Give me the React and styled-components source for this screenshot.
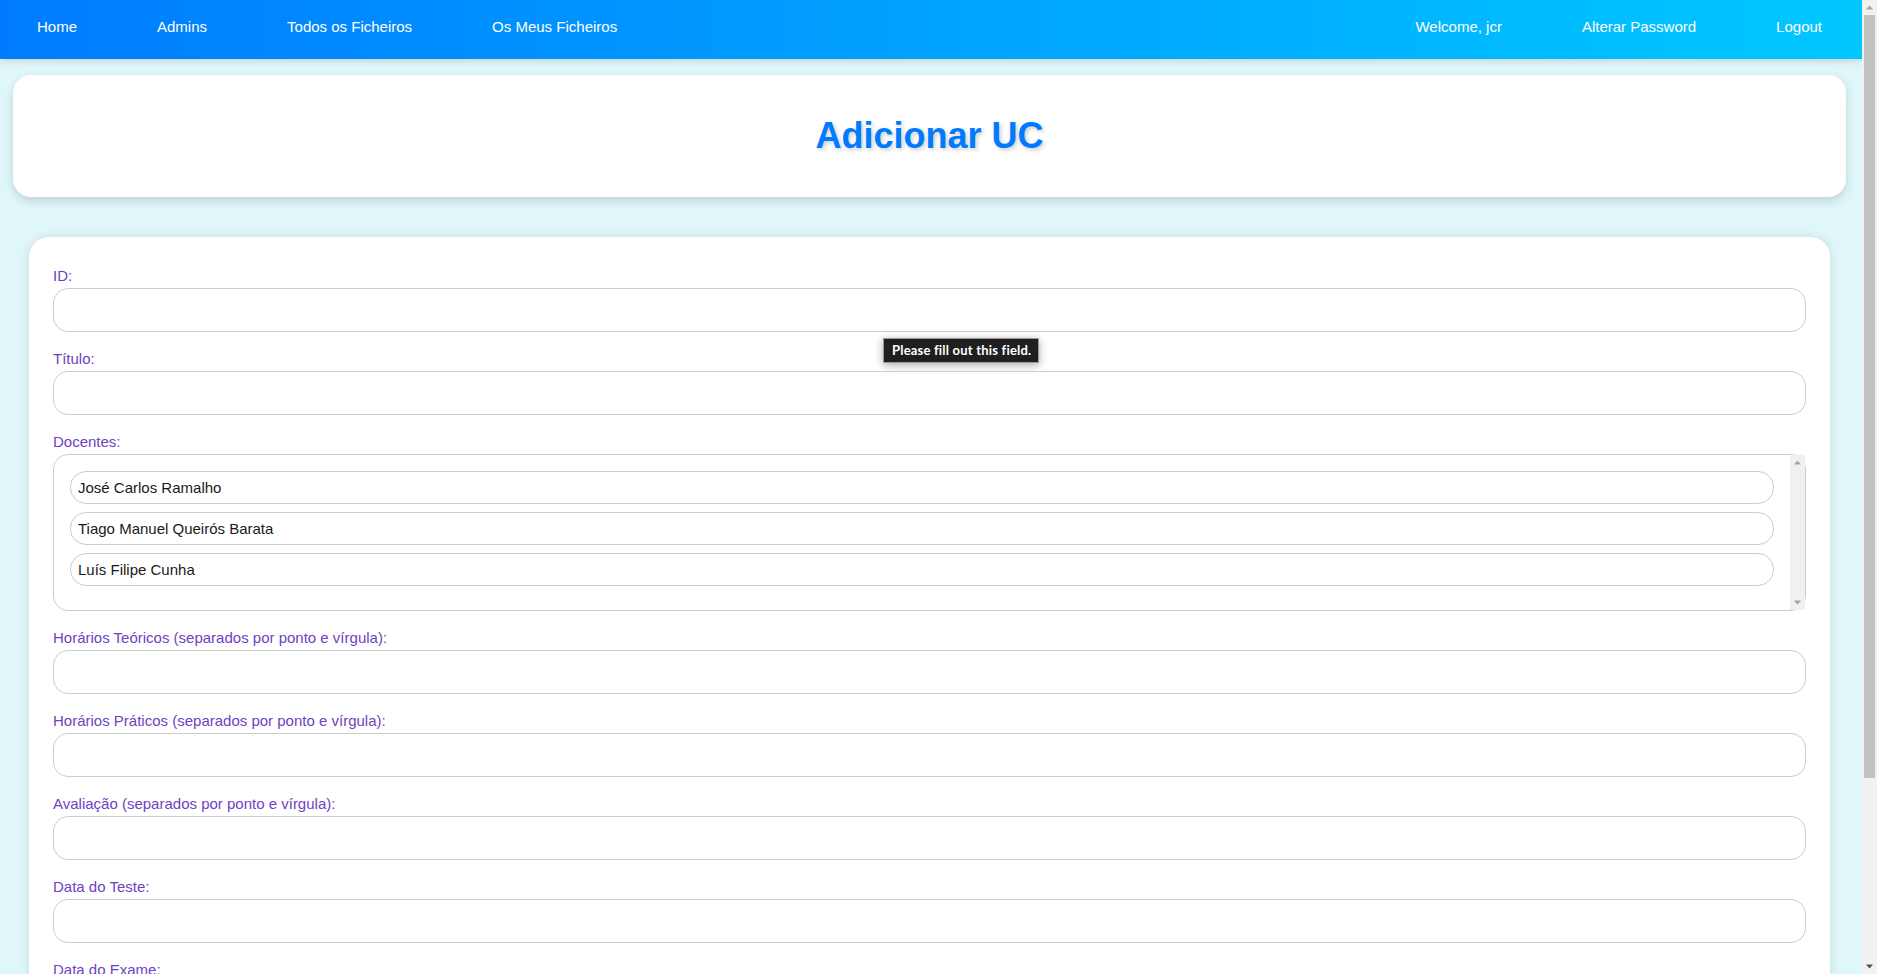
import React from "react";
import styled, { createGlobalStyle } from "styled-components";

const GlobalStyle = createGlobalStyle`
  html, body {
    margin: 0;
    padding: 0;
    overflow: hidden;
  }
  body {
    background: #e0f7fa;
    font-family: "Liberation Sans", Arial, sans-serif;
  }
  * { box-sizing: border-box; }
`;

/* ---------- classic scrollbar drawing ---------- */

const Rail = styled.div`
  flex: 0 0 15px;
  width: 15px;
  display: flex;
  flex-direction: column;
  background: ${(p) => p.$track};
`;

const ArrowButton = styled.div`
  flex: 0 0 15px;
  height: 15px;
  display: flex;
  align-items: center;
  justify-content: center;
`;

const Thumb = styled.div`
  flex: 0 0 ${(p) => p.$length}px;
  margin: 0 2px;
  background: #c1c1c1;
`;

const RailSpacer = styled.div`
  flex: 1;
`;

const Arrow = ({ dir, color }) => (
  <svg width="15" height="15" viewBox="0 0 15 15">
    <polygon
      points={dir === "up" ? "4,9.5 11,9.5 7.5,5.5" : "4,5.5 11,5.5 7.5,9.5"}
      fill={color}
    />
  </svg>
);

const ScrollRail = ({ track, thumb, upColor, downColor }) => (
  <Rail $track={track}>
    <ArrowButton>
      <Arrow dir="up" color={upColor} />
    </ArrowButton>
    {thumb ? <Thumb $length={thumb} /> : null}
    <RailSpacer />
    <ArrowButton>
      <Arrow dir="down" color={downColor} />
    </ArrowButton>
  </Rail>
);

/* ---------- page ---------- */

const Page = styled.div`
  display: flex;
  height: 100vh;
  background: #e0f7fa;
`;

const Viewport = styled.div`
  flex: 1;
  min-width: 0;
  overflow: hidden;
`;

const Navbar = styled.nav`
  display: flex;
  justify-content: space-between;
  align-items: center;
  height: 59px;
  padding: 0 40px 7px 37px;
  background: linear-gradient(to right, #007bff, #00c8ff);
  box-shadow: 0 2px 8px rgba(0, 0, 0, 0.15);
`;

const NavGroup = styled.div`
  display: flex;
  align-items: center;
  gap: 80px;
`;

const NavLink = styled.a`
  color: #ffffff;
  font-size: 15px;
  text-decoration: none;
  white-space: nowrap;
`;

const TitleCard = styled.header`
  display: flex;
  align-items: center;
  justify-content: center;
  height: 122px;
  margin: 16px 16px 0 13px;
  background: #ffffff;
  border-radius: 18px;
  box-shadow: 0 4px 10px rgba(0, 0, 0, 0.15);
`;

const Title = styled.h1`
  margin: 0;
  font-size: 36px;
  font-weight: 700;
  color: #007bff;
  text-shadow: 2px 2px 4px rgba(0, 0, 0, 0.2);
`;

const FormCard = styled.form`
  margin: 40px 32px 72px 29px;
  padding: 30px 24px 30px;
  background: #ffffff;
  border-radius: 20px;
  box-shadow: 0 0 10px rgba(0, 0, 0, 0.12);
`;

const Field = styled.div`
  position: relative;
  margin-bottom: 18px;
`;

const Label = styled.label`
  display: block;
  margin-bottom: 4px;
  font-size: 15px;
  line-height: 17px;
  color: #6f42c1;
`;

const TextInput = styled.input`
  display: block;
  width: 100%;
  height: 44px;
  padding: 0 12px;
  border: 1px solid #cccccc;
  border-radius: 15px;
  background: #ffffff;
  font-family: "Liberation Sans", Arial, sans-serif;
  font-size: 15px;
  outline: none;
`;

const DocentesBox = styled.div`
  display: flex;
  height: 157px;
  border: 1px solid #cccccc;
  border-radius: 15px;
`;

const DocentesList = styled.div`
  flex: 1;
  min-width: 0;
  padding: 16px;
`;

const DocenteItem = styled.input`
  display: block;
  width: 100%;
  height: 33px;
  margin-bottom: 8px;
  padding: 0 7px;
  border: 1px solid #cccccc;
  border-radius: 16px;
  background: #ffffff;
  color: #1a1a1a;
  font-family: "Liberation Sans", Arial, sans-serif;
  font-size: 15px;
  outline: none;
`;

const Tooltip = styled.div`
  position: absolute;
  top: 71px;
  left: 830px;
  padding: 4px 7px 5px 8px;
  background: #1f1f1f;
  border: 1px solid #9a9a9a;
  color: #ffffff;
  font-family: Lato, "Open Sans", sans-serif;
  font-weight: 700;
  font-size: 13px;
  letter-spacing: 0.2px;
  line-height: 14px;
  white-space: nowrap;
  box-shadow: 0 2px 8px rgba(0, 0, 0, 0.35);
`;

const SubmitButton = styled.button`
  display: block;
  width: 100%;
  height: 48px;
  margin-top: 10px;
  border: none;
  border-radius: 15px;
  background: linear-gradient(to right, #007bff, #00c8ff);
  color: #ffffff;
  font-family: "Liberation Sans", Arial, sans-serif;
  font-size: 16px;
  font-weight: 700;
`;

const docentes = [
  "José Carlos Ramalho",
  "Tiago Manuel Queirós Barata",
  "Luís Filipe Cunha",
];

const textFields = [
  "Horários Teóricos (separados por ponto e vírgula):",
  "Horários Práticos (separados por ponto e vírgula):",
  "Avaliação (separados por ponto e vírgula):",
  "Data do Teste:",
  "Data do Exame:",
];

export default function App() {
  return (
    <>
      <GlobalStyle />
      <Page>
        <Viewport>
          <Navbar>
            <NavGroup>
              <NavLink href="#">Home</NavLink>
              <NavLink href="#">Admins</NavLink>
              <NavLink href="#">Todos os Ficheiros</NavLink>
              <NavLink href="#">Os Meus Ficheiros</NavLink>
            </NavGroup>
            <NavGroup>
              <NavLink href="#">Welcome, jcr</NavLink>
              <NavLink href="#">Alterar Password</NavLink>
              <NavLink href="#">Logout</NavLink>
            </NavGroup>
          </Navbar>
          <TitleCard>
            <Title>Adicionar UC</Title>
          </TitleCard>
          <FormCard onSubmit={(e) => e.preventDefault()}>
            <Field>
              <Label>ID:</Label>
              <TextInput type="text" />
              <Tooltip>Please fill out this field.</Tooltip>
            </Field>
            <Field>
              <Label>Título:</Label>
              <TextInput type="text" />
            </Field>
            <Field>
              <Label>Docentes:</Label>
              <DocentesBox>
                <DocentesList>
                  {docentes.map((d) => (
                    <DocenteItem key={d} type="text" defaultValue={d} />
                  ))}
                </DocentesList>
                <ScrollRail track="#f0f0f0" upColor="#a3a3a3" downColor="#a3a3a3" />
              </DocentesBox>
            </Field>
            {textFields.map((t) => (
              <Field key={t}>
                <Label>{t}</Label>
                <TextInput type="text" />
              </Field>
            ))}
            <SubmitButton type="submit">Adicionar</SubmitButton>
          </FormCard>
        </Viewport>
        <ScrollRail
          track="#f1f1f1"
          thumb={763}
          upColor="#a3a3a3"
          downColor="#505050"
        />
      </Page>
    </>
  );
}
